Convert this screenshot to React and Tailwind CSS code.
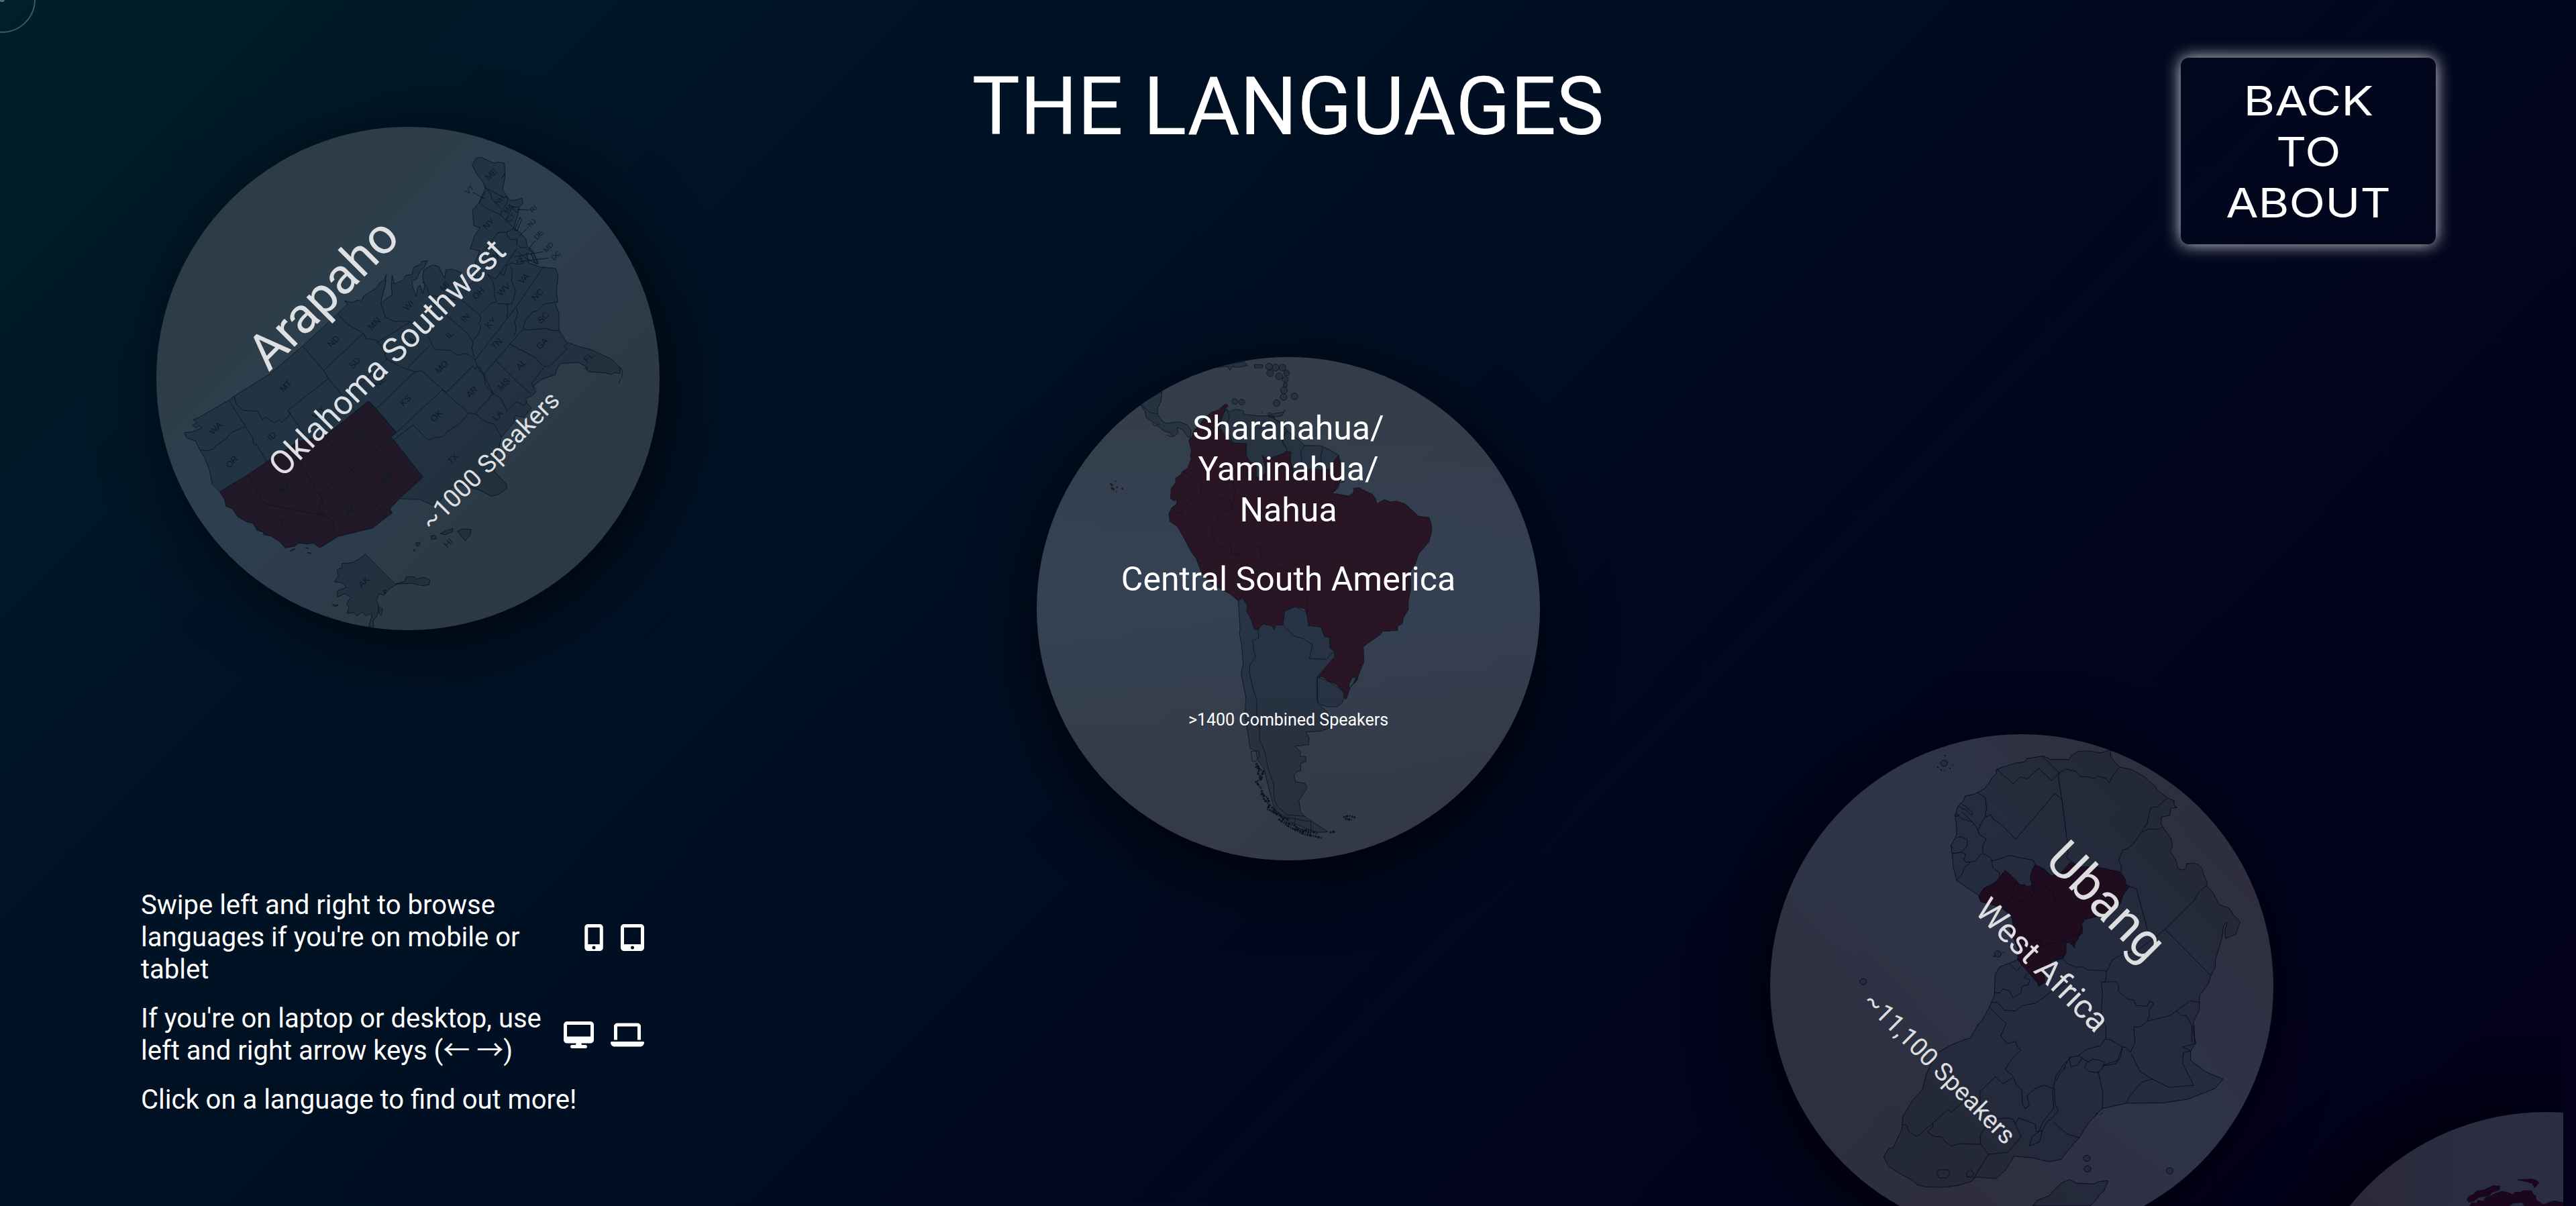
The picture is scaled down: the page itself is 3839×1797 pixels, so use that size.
import React from "react";
import { FaDesktop, FaLaptop, FaMobileScreenButton, FaTabletScreenButton } from "react-icons/fa6";

const STATES = [
  ["WA", 232, 937], ["OR", 278, 1035], ["ID", 392, 960], ["MT", 432, 814], ["ND", 568, 683],
  ["SD", 628, 746], ["MN", 684, 632], ["WI", 782, 578], ["MI", 884, 522], ["OH", 981, 543],
  ["IN", 943, 614], ["IL", 898, 663], ["KY", 1016, 629], ["WV", 1053, 532], ["VA", 1110, 500],
  ["NC", 1149, 547], ["SC", 1165, 614], ["TN", 1032, 690], ["GA", 1162, 690], ["AL", 1103, 751],
  ["MS", 1053, 808], ["MO", 876, 758], ["AR", 962, 831], ["KS", 773, 856], ["OK", 861, 901],
  ["LA", 1036, 900], ["TX", 908, 1026], ["NE", 700, 802], ["CO", 643, 960], ["UT", 529, 1047],
  ["NV", 425, 1110], ["NM", 718, 1081], ["AZ", 615, 1177], ["CA", 415, 1215], ["FL", 1295, 730],
  ["NY", 1010, 340], ["ME", 1018, 195], ["PA", 1030, 435], ["WY", 525, 890], ["IA", 790, 685],
  ["HI", 895, 1272], ["AK", 654, 1386],
];

const SMALL_STATES = [
  ["VT", 955, 240], ["NH", 1041, 270], ["MA", 1065, 295], ["CT", 1073, 322], ["RI", 1137, 296],
  ["NJ", 1132, 337], ["DE", 1152, 372], ["MD", 1180, 408], ["DC", 1201, 432],
];

function StateLabels({ items, size }) {
  return items.map(([name, x, y]) => (
    <text
      key={name}
      transform={`translate(${x * 0.523 - 33} ${y * 0.5102 - 29}) rotate(-45)`}
      fontSize={size}
      textAnchor="middle"
      dominantBaseline="central"
      fontFamily="Liberation Sans, sans-serif"
      fill="#0e1c28"
    >
      {name}
    </text>
  ));
}

function UnitedStates() {
  return (
    <svg className="absolute inset-0 size-full" viewBox="0 0 750 750" fill="none" stroke="#0b1824" strokeLinejoin="round">
      <g transform="translate(-33 -29) scale(.523 .5102)" strokeWidth="1.8">
        <g fill="#081824" fillOpacity=".26">
          <path d="M143 950 165 948 192 937 185 930 176 936 166 928 178 922 168 912 180 908 270 855 285 843 385 780 480 697 580 603 608 575 600 565 622 570 635 563 648 565 655 550 690 528 700 512 712 505 718 488 716 515 705 560 703 572 722 556 735 548 733 520 735 490 741 516 765 505 775 490 792 488 796 468 815 458 820 450 835 448 828 465 815 478 805 500 792 508 793 522 803 552 808 525 815 520 823 545 828 520 822 495 825 475 850 460 868 465 875 480 885 500 888 475 905 472 930 482 945 510 935 530 960 515 975 490 972 450 985 420 958 412 970 375 985 352 968 345 964 300 983 278 1001 235 992 215 978 198 963 168 975 148 988 146 1025 163 1037 160 1055 163 1057 200 1050 240 1063 262 1072 272 1088 270 1105 265 1108 280 1098 290 1094 310 1082 352 1100 365 1116 385 1120 405 1135 418 1152 458 1140 452 1132 430 1118 425 1125 455 1160 467 1200 470 1208 490 1203 540 1207 568 1200 575 1210 600 1211 652 1232 685 1265 698 1300 707 1360 735 1385 760 1384 778 1370 774 1360 780 1340 775 1295 772 1285 755 1265 745 1215 748 1204 765 1200 780 1160 795 1135 815 1145 830 1135 842 1116 850 1118 862 1132 878 1110 905 1085 900 1082 920 1045 965 1040 992 1028 1020 1027 1065 1060 1100 1062 1113 1040 1130 1018 1136 985 1118 925 1100 890 1120 872 1148 850 1162 815 1145 755 1143 728 1173 735 1185 718 1197 680 1228 580 1253 529 1286 510 1272 495 1275 470 1272 455 1282 430 1286 415 1268 390 1252 370 1248 368 1240 350 1235 340 1215 320 1210 295 1195 280 1172 262 1165 258 1145 244 1122 222 1100 215 1060 200 1022 187 1000 175 975 150 965Z" />
          <path d="M659 1305 743 1392 770 1385 775 1372 795 1370 805 1378 825 1372 843 1380 840 1394 820 1397 790 1390 750 1392 728 1405 712 1425 698 1420 690 1440 697 1455 692 1485 680 1500 683 1517 668 1517 677 1485 675 1478 660 1485 650 1473 635 1485 625 1475 607 1478 612 1460 605 1450 617 1430 600 1420 580 1430 578 1412 605 1402 592 1388 570 1385 582 1370 578 1350 592 1345 592 1332 620 1330 640 1320Z" />
          <path d="M921 1238 935 1231 960 1233 958 1248 943 1266 930 1250ZM872 1245 890 1236 908 1230 906 1240 885 1248ZM845 1252 858 1250 861 1259 848 1262ZM803 1272 814 1270 813 1279 805 1281ZM796 1296 800 1290 799 1295ZM698 1460 708 1465 704 1483 697 1478ZM565 1452 582 1454 570 1458ZM708 1412 718 1410 714 1420Z" />
        </g>
        <path fill="#261a28" d="M244 1122 324 1073 378 1035 470 975 545 958 668 858 747 950 732 962 823 1080 755 1143 728 1173 735 1185 718 1197 680 1228 580 1253 529 1286 510 1272 495 1275 470 1272 455 1282 430 1286 415 1268 390 1252 370 1248 368 1240 350 1235 340 1215 320 1210 295 1195 280 1172 262 1165 258 1145Z" />
        <path d="M444 1296 458 1289M488 1286 497 1289M494 1300 504 1303" stroke="#261a28" strokeWidth="4" />
        <path d="M187 1000 205 1003 225 998 232 988 260 970 280 948 317 932M270 855 317 932 338 965 340 982 350 987 378 1035M285 843 290 865 310 885 352 887 365 912 375 905 400 922 415 912 420 920 445 897 438 885 553 792M438 885 495 970M480 697 540 768 553 792 632 890M540 768 650 663M580 603 610 635 645 655 655 663 660 675 690 680 712 710 718 735 765 760 800 772 820 770 888 832M703 572 712 600 715 612 740 625 780 625 800 630M690 688 785 628M690 880 800 772M600 852 720 735M632 890 668 858 690 880 747 950 878 825 888 832M735 975 795 927 838 972 855 965 880 962 895 945 925 925 940 910 953 893 878 825M780 760 840 698M953 893 972 895 1023 835 1005 800 982 755M972 895 1005 920 1025 925 1048 965M1120 860 1112 870 1090 860 1062 887 1045 850 1023 835" />
        <path d="M324 1073 372 1158 545 1193M455 1010 528 1130 538 1155 525 1160 530 1178 545 1193 570 1210 565 1230 578 1250M528 1130 618 1058 732 965M545 960 618 1058 718 1197" />
        <path d="M965 248 1000 268M1090 298 1125 300M1097 376 1123 350M1123 415 1142 390M1082 436 1165 422M1100 450 1182 440M1385 758 1391 770 1389 790M1385 792 1381 806" />
      </g>
      <g transform="translate(367 31) scale(.33333)" strokeWidth="2.8">
        <path d="M370 178 395 208 400 232 445 275M365 178 452 222 467 218 470 240 445 280 437 302M372 195 342 247 365 265 405 285 437 300 460 325 498 360M460 325 492 265 520 265M492 265 500 282 515 292M498 362 465 377 425 380 400 415 370 455M465 377 470 400 487 412 510 408 512 435 530 448 555 445M512 450 415 590 380 565 405 600 412 640 410 660 420 690 395 695 345 745M500 370 525 310 530 325 512 372ZM437 560 455 572 465 525 490 515 515 522M480 530 490 550 487 595 505 640 495 680 485 700 425 697M632 530 505 715 323 950M685 690 630 700 600 730 580 735 550 770 540 800 545 815 600 812 640 808 660 815 700 820M508 715 515 740 502 780 508 815 500 838M540 810 365 1010M478 878 595 938 610 960 635 978 655 978 735 900 722 890 740 872M635 978 575 1058 600 1080M415 950 520 1055 575 1100M325 955 345 1000 365 1010 370 1060 390 1085 405 1105M195 1095 315 975 325 990 335 978M115 845 135 885 145 903 210 905 225 915 245 928 280 920 310 935 325 950M195 750 285 825 300 845 315 870 310 895 320 935M312 870 345 820 350 800 340 785 350 765 342 745 262 680M90 600 110 625 120 660 240 680M100 740 195 660 240 680M468 700 470 740 465 760M510 505 525 495 540 515 520 522ZM515 465 545 490 600 520M520 480 535 500M560 455 585 470 605 515M440 140 458 115 448 130M812 988 826 982 822 995" />
      </g>
      <g stroke="none">
        <StateLabels items={STATES} size={13} />
        <StateLabels items={SMALL_STATES} size={10.5} />
      </g>
    </svg>
  );
}

const CARIBBEAN = [
  [728, 72, 10], [747, 75, 10], [767, 75, 10], [731, 91, 10], [757, 101, 10], [779, 91, 8],
  [775, 110, 9], [775, 126, 6], [771, 142, 10], [770, 162, 10], [802, 160, 10], [750, 180, 10],
  [628, 175, 8.5], [648, 177, 8.5],
];

function SouthAmerica() {
  return (
    <svg className="absolute inset-0 size-full" viewBox="0 0 750 750" fill="none" stroke="#0c1724" strokeLinejoin="round">
      <g transform="translate(-25 -22) scale(.5102 .5038)" strokeWidth="1.8">
        <g fill="#0c1c2a" fillOpacity=".32">
          <path d="M603 197 592 215 585 235 583 262 600 280 622 298 662 300 660 330 668 350 690 365 690 398 710 400 722 390 710 340 735 342 765 330 782 320 768 298 768 282 780 262 770 245 745 228 740 217 700 218 655 213 652 202 630 198 612 205Z" />
          <path d="M780 262 810 285 832 305 880 306 905 318 932 335 905 378 850 378 795 382 788 345 790 322 768 298 768 282Z" />
          <path d="M638 765 643 850 641 860 648 900 652 950 646 980 650 1000 660 1050 657 1100 668 1170 672 1200 690 1210 694 1235 712 1260 722 1300 735 1350 745 1385 780 1415 840 1440 870 1450 900 1448 850 1415 835 1405 820 1390 815 1355 835 1325 838 1315 832 1304 805 1300 800 1280 810 1270 820 1267 820 1245 835 1240 835 1225 818 1225 820 1212 803 1195 843 1190 845 1170 835 1153 880 1150 905 1140 905 1110 895 1090 870 1070 868 990 900 958 920 930 918 912 906 905 905 872 890 870 880 842 843 838 838 800 805 782 773 795 768 836 748 836 710 832 696 850 685 848 665 780 650 755Z" />
          <path d="M868 990 900 1002 945 1033 948 1050 940 1068 925 1078 900 1078 878 1072 868 1060Z" />
          <path d="M352 183 415 145 412 175 402 195 402 212 415 232 428 240 465 235 490 245 500 262 498 285 488 278 475 258 458 252 462 268 448 280 438 268 420 262 400 245 368 222 366 205Z" />
          <path d="M575 74 610 65 655 57 665 68 640 74 620 72 613 83 608 72ZM685 66 710 67 708 75 686 76ZM725 214 772 206 765 218 728 222Z" />
          {CARIBBEAN.map(([x, y, r]) => (
            <circle key={`${x}-${y}`} cx={x} cy={y} r={r} />
          ))}
        </g>
        <path fill="#2a1524" d="M605 183 597 184 580 200 560 207 540 222 520 250 510 258 502 280 493 290 501 320 498 335 500 345 490 372 475 382 470 392 455 402 455 415 442 432 440 462 452 470 458 462 458 478 443 490 435 508 438 530 460 545 480 580 500 620 515 640 530 680 560 715 615 745 638 765 650 755 665 780 662 795 675 820 685 848 696 850 710 832 720 836 735 838 742 850 748 836 768 836 773 795 805 782 830 788 838 800 843 838 880 842 890 870 905 872 906 905 918 912 920 930 895 958 870 990 885 990 900 1002 920 1010 945 1033 947 1052 953 1055 965 1020 985 1000 990 980 1005 945 1003 900 1020 888 1052 865 1060 855 1103 852 1103 840 1117 832 1120 815 1135 790 1134 770 1142 725 1140 680 1155 655 1165 625 1195 590 1203 560 1202 540 1195 518 1165 515 1125 478 1100 470 1080 472 1065 465 1042 478 1040 465 1030 450 990 430 975 432 975 445 960 455 935 450 912 447 930 430 933 415 942 400 935 350 930 335 915 355 905 375 885 378 850 375 800 384 790 350 792 325 778 322 770 330 735 342 722 348 708 335 716 360 718 385 700 402 690 398 690 365 668 350 660 330 662 300 622 298 600 280 590 262 583 250 590 225 600 195 608 190Z" />
        <path fill="#343c4a" d="M970 992 982 990 975 1008 960 1025 962 1010Z" />
        <path d="M475 382 490 390 510 405 530 418 528 450 505 465 485 480 470 508 455 503 447 485M530 418 545 432 555 448 575 462 600 460 618 475 620 495M622 385 622 415 630 440 620 495 600 498 580 512 572 530 560 560 572 597 590 605 600 605 615 597 618 625 635 625 650 665 643 700 650 755M622 385 640 380 690 398M635 627 665 620 700 600 705 635 730 655 780 675 810 705 830 740 842 765 838 800M832 305 820 325 825 365M885 308 878 340 885 375M603 197 612 222 600 250 622 298M352 183 380 208 402 212" />
        <path d="M696 850 697 875 680 882 682 905 688 930 672 955 670 975 680 1020 692 1060 692 1100 700 1140 700 1175 715 1210 725 1260 742 1310 742 1345 750 1370 780 1398 835 1402M768 836 800 868 830 878 855 895 845 935 895 938 918 912M780 1405 850 1418 850 1450M805 1405 800 1430 825 1440" />
        <g stroke="#0b1320" strokeWidth="6" strokeDasharray="5 2 8 3 3 3">
          <path d="M690 1245 700 1262 695 1275 708 1290 690 1300 705 1320M688 1255 712 1270 700 1290M706 1325 712 1350 730 1370 722 1380 748 1392M703 1335 722 1345 728 1360M740 1390 765 1405 775 1420 800 1428 820 1445 850 1452M735 1375 760 1398 785 1412M755 1410 790 1435 830 1455 885 1466M905 1450 920 1447M945 1405 962 1400 980 1406M950 1410 970 1412M800 1440 850 1445 870 1455" />
        </g>
        <path d="M675 1210 698 1208 700 1225 688 1240 678 1238Z" />
        <path d="M263 418 272 424M266 430 276 436M280 410 280 413M282 428 285 430M281 440 283 441M297 434 301 432" stroke="#2a1524" strokeWidth="6" />
        <path d="M908 447 925 430 918 420 948 412 945 400M925 452 960 458M704 208 708 209M720 211 735 208M770 203 776 200M735 222 750 230 770 240M385 240 395 248 408 242M430 275 445 280" />
      </g>
    </svg>
  );
}

function Africa() {
  return (
    <svg className="absolute inset-0 size-full" viewBox="0 0 750 750" fill="none" stroke="#080d1e" strokeLinejoin="round">
      <g transform="translate(-28 -24) scale(.5102 .4636)" strokeWidth="1.9">
        <g fill="#0c1a28" fillOpacity=".26">
          <path d="M853 122 875 133 928 133 935 120 955 107 985 105 1020 112 1048 102 1050 125 1062 140 1075 157 1095 162 1110 165 1150 190 1180 220 1185 230 1218 258 1235 265 1235 280 1243 287 1225 290 1222 312 1198 318 1197 340 1205 355 1225 385 1230 410 1224 430 1240 455 1247 485 1262 488 1270 480 1272 468 1290 466 1305 470 1318 485 1320 500 1332 528 1330 540 1345 555 1367 600 1395 610 1410 635 1428 655 1415 695 1385 708 1383 685 1390 655 1380 665 1375 705 1355 780 1355 800 1342 828 1335 855 1310 890 1308 940 1292 975 1290 1000 1298 1045 1283 1070 1283 1100 1325 1135 1345 1145 1378 1160 1355 1190 1275 1225 1200 1237 1095 1238 1025 1255 985 1300 960 1345 925 1390 905 1418 870 1426 820 1413 768 1408 740 1455 715 1480 655 1475 645 1488 605 1502 560 1508 510 1507 485 1500 470 1485 440 1468 400 1440 387 1410 400 1385 415 1380 440 1320 443 1280 470 1230 500 1193 510 1150 525 1110 545 1075 585 1050 620 1035 640 1028 665 980 675 970 695 930 710 890 712 825 725 800 775 778 790 750 770 700 765 650 750 625 725 605 670 590 665 570 630 545 600 522 590 480 587 440 583 410 600 375 598 330 595 320 602 285 620 265 625 250 650 245 680 228 697 205 700 195 715 180 715 165 770 145 800 140 805 130Z" />
          <path d="M822 1568 835 1550 870 1535 890 1510 905 1495 930 1483 950 1495 1000 1497 1015 1490 1042 1487 1030 1520 1015 1535 1010 1545 990 1568Z" />
          <circle cx="980" cy="1415" r="10" />
          <circle cx="982" cy="1449" r="10" />
          <circle cx="1222" cy="1455" r="10" />
          <circle cx="327" cy="847" r="10" />
          <circle cx="720" cy="758" r="10" />
          <circle cx="563" cy="145" r="10" />
        </g>
        <path d="M543 156 546 160M553 164 556 170M563 170 564 168M579 160 582 163M587 150 589 152M564 119 568 122M707 764 711 768M735 754 738 752" strokeWidth="3" />
        <path d="M765 1155 735 1175 712 1153 668 1200 668 1245M765 1155 775 1180 790 1195 792 1240 800 1255 812 1245 805 1215 830 1190 855 1180 880 1190 M885 1190 887 1240 897 1262 875 1290 865 1295 850 1325 842 1362 812 1375 820 1345 840 1330 850 1300 883 1255 880 1200 890 1150 915 1110 935 1090M920 1120 900 1145 890 1165M1013 1135 1027 1205 1025 1255M1083 1060 1070 1100 1030 1115M1095 1238 1105 1215 1140 1170 1170 1160 1220 1187 1292 1180 1260 1110 1262 1075 1283 1070M1110 1080 1135 1135 1170 1160M443 1305 455 1310 460 1330 485 1345 575 1258 583 1267 640 1215M530 1300 530 1315 515 1330 535 1345 555 1345 570 1365 585 1375 610 1368 670 1370 693 1402 650 1478M670 1370 668 1340 700 1290 750 1285 765 1290 788 1345 750 1395 693 1402M772 1305 780 1285 830 1305 832 1330 850 1325M885 1300 920 1335 960 1350" />
        <path d="M541 1462 548 1452 575 1452 580 1465 570 1478 548 1478ZM628 1462 640 1452 650 1462 645 1475 630 1474ZM1005 1280 1010 1268M1020 1275 1026 1268" />
      </g>
      <g transform="translate(242 -14) scale(.33333)" strokeWidth="2.8">
        <path fill="#250e20" d="M620 612 660 635 735 635 840 658 862 690 865 715 880 722 850 765 840 800 800 830 745 855 680 870 668 890 672 930 655 945 650 960 637 975 635 997 610 972 597 975 597 1020 583 1045 535 1055 500 1100 502 1150 475 1170 470 1155 380 1050 385 1010 345 910 360 895 355 855 310 820 270 805 215 790 207 765 230 730 270 710 285 700 325 650 375 695 390 715 412 715 425 725 445 715 437 680 445 650 460 625 500 645 530 675 570 665Z" />
        <path d="M288 198 360 264 395 233 425 242 475 194 533 250 567 215M490 140 567 215 562 230 578 330 602 520 605 575 598 590 620 612M567 215 595 198 640 208 660 230 690 232 725 240 740 228 775 240 790 260 800 235 835 190M578 333 548 307 390 490 372 512 300 440 270 420 262 402 235 412M200 302 235 325 242 370 235 412 218 440 205 470 180 435 130 390M200 465 210 490 240 510 225 540 225 575 255 590 265 605M110 400 130 420 165 430 180 435M108 505 130 500 155 515 155 540 130 570 90 575M130 570 150 580 140 600 150 615 190 610 220 575M108 695 135 665 140 640 170 615M265 605 270 640 298 660 300 680M265 608 305 598 345 583 380 592 450 605 460 625M935 478 920 500 900 530 870 555 850 560 833 605 845 635 843 658M935 478 960 440 975 370 1005 367 1045 330M935 480 970 465 1010 468 1025 458M880 722 912 733 962 920M1225 718 1190 750 1165 790 1040 915 920 1005 850 1025 805 1050 780 1100M1040 915 1243 1120M583 1045 600 1065 645 1085 670 1080 690 1095 778 1100 775 1140 755 1160 760 1200 755 1280 755 1300 775 1350 775 1400M755 1150 820 1148 832 1165 830 1190 870 1225 900 1230 910 1255 960 1258 970 1235 990 1245 968 1275 970 1300 960 1325M775 1405 800 1410 850 1440 865 1442 885 1465 905 1420 900 1350 930 1350 960 1325 1060 1300 1090 1280 1150 1235 1195 1240M1090 1280 1110 1298 1135 1300 1160 1345 1160 1420M1170 1345 1172 1425 1140 1435 1120 1440 1150 1455M345 1068 375 1100 400 1075M275 1195 300 1200 315 1180 345 1190 360 1220 395 1200 400 1170 430 1160 435 1140 410 1130 425 1110M265 1240 290 1240 320 1275 370 1280 400 1255 460 1245 530 1195 600 1155M255 1265 330 1335 305 1390 335 1425 370 1415 380 1440 395 1455 350 1500 325 1540 360 1570M775 1400 750 1435 690 1450 650 1480 615 1485 600 1510 585 1540M850 1440 840 1490 820 1515 760 1525M655 1480 700 1510M610 1490 620 1530 650 1520 670 1485" />
        <path d="M680 1530 690 1510 715 1495 745 1498 770 1510 758 1535 740 1555 700 1550ZM115 360 130 375 150 380 175 405 180 395 150 365 130 355M95 400 105 410 120 405M80 540 92 548" />
        <path d="M455 748 485 730 510 725 540 755 545 785 560 800 580 830 600 835 635 875 672 880M455 748 440 770 420 785 380 792 330 840M375 700 360 740 300 800M385 715 375 755 315 810M445 700 455 748M425 960 480 962 490 990 560 970 600 960 630 940 655 940 665 910 672 905" />
      </g>
    </svg>
  );
}

function FarMap() {
  return (
    <svg className="absolute inset-0 size-full" viewBox="0 0 750 750" fill="#220820" stroke="#140618" strokeWidth="2">
      <g transform="translate(20 -57) scale(.33333)">
        <path d="M712 560 725 545 740 540 755 525 790 518 830 500 860 502 858 518 825 530 812 545 800 548 765 552 745 568 720 575ZM725 591 735 575 755 580 760 565 785 570 795 555 820 545 850 530 870 525 900 532 915 540 930 528 950 530 965 522 1000 522 1010 540 1020 545 1022 565 1040 575 1055 585 1080 575 1100 568 1143 575 1143 600 975 600 960 575 920 578 890 600ZM937 474 1000 470 1020 475 1035 487 1015 510 1005 490 975 482Z" />
        <path fill="none" d="M790 520 800 545M850 532 865 580M905 535 905 575M955 530 990 560 990 590" />
      </g>
    </svg>
  );
}

function Planet({ place, tilt, fade, map, title, titleStyle, region, speakers, speakersStyle }) {
  return (
    <section className={`absolute size-[750px] ${place} ${fade}`}>
      <div
        className={`absolute inset-0 rounded-full bg-[linear-gradient(180deg,rgba(118,119,121,.44)_5%,rgba(115,128,142,.45)_40%,rgba(115,128,142,.45)_52%,rgba(118,119,121,.44)_85%)] shadow-[0_25px_100px_rgba(0,0,0,.75)] ${tilt}`}
      />
      <div className="absolute inset-0 overflow-hidden rounded-full">{map}</div>
      <div className={`relative flex size-full flex-col text-center text-white ${tilt}`}>
        <div className={`h-[301px] shrink-0 ${titleStyle}`}>{title}</div>
        <div className="h-[225px] shrink-0 text-[50px] leading-[61px]">{region}</div>
        <div className={speakersStyle}>{speakers}</div>
      </div>
    </section>
  );
}

export default function App() {
  return (
    <main className="relative h-[1797px] w-[3839px] overflow-hidden bg-[linear-gradient(135deg,#001f29_0%,#001426_22%,#000e22_46%,#01091f_58%,#02041c_74%,#03001a_100%)] font-['Roboto',sans-serif] text-white">
      <div className="absolute inset-y-0 left-0 w-[3820px] overflow-hidden">
        <Planet
          place="left-[233px] top-[189px]"
          tilt="-rotate-45"
          fade="opacity-[.87]"
          map={<UnitedStates />}
          title="Arapaho"
          titleStyle="pt-[151px] text-[75px] leading-[91px]"
          region="Oklahoma Southwest"
          speakers="~1000 Speakers"
          speakersStyle="text-[37.5px] leading-[45px]"
        />
        <Planet
          place="left-[1545px] top-[532px]"
          tilt="rotate-0"
          fade="opacity-100"
          map={<SouthAmerica />}
          title={<>Sharanahua/<br />Yaminahua/<br />Nahua</>}
          titleStyle="pt-[76px] text-[50px] leading-[61px]"
          region="Central South America"
          speakers=">1400 Combined Speakers"
          speakersStyle="text-[25px] leading-[30px]"
        />
        <Planet
          place="left-[2638px] top-[1094px]"
          tilt="rotate-45"
          fade="opacity-[.87]"
          map={<Africa />}
          title="Ubang"
          titleStyle="pt-[151px] text-[75px] leading-[91px]"
          region="West Africa"
          speakers="~11,100 Speakers"
          speakersStyle="text-[37.5px] leading-[45px]"
        />
        <Planet place="left-[3419px] top-[1657px]" tilt="rotate-90" fade="opacity-[.8]" map={<FarMap />} />
      </div>

      <div className="relative flex h-full flex-col justify-between pb-[134px]">
        <header className="grid grid-cols-[1fr_auto_1fr] items-start pr-[209px] pl-[209px] pt-[86px]">
          <span />
          <h1 className="pt-[1px] text-[120px] leading-[145px]">THE LANGUAGES</h1>
          <button className="flex h-[278px] w-[380px] flex-col items-center justify-center justify-self-end rounded-xl pt-[2px] font-['Inter',sans-serif] text-[60px] leading-[76px] shadow-[0_0_25px_rgba(255,255,255,.85)]">
            <span className="scale-x-[1.19]">BACK</span>
            <span className="scale-x-[1.16]">TO</span>
            <span className="scale-x-[1.17]">ABOUT</span>
          </button>
        </header>

        <footer className="ml-[210px] flex w-[750px] flex-col gap-[25px] text-[40px] leading-[48px]">
          <div className="flex items-center justify-between">
            <p>Swipe left and right to browse<br />languages if you're on mobile or<br />tablet</p>
            <div className="flex items-center gap-[25px]">
              <FaMobileScreenButton className="h-10 w-[30px]" />
              <FaTabletScreenButton className="h-10 w-[35px]" />
            </div>
          </div>
          <div className="flex items-center justify-between">
            <p className="h-24">
              If you're on laptop or desktop, use<br />left and right arrow keys (
              <span className="font-['Noto_Sans_CJK_JP',sans-serif] leading-none">←</span>{" "}
              <span className="font-['Noto_Sans_CJK_JP',sans-serif] leading-none">→</span>)
            </p>
            <div className="flex items-center gap-[25px]">
              <FaDesktop className="h-10 w-[45px]" />
              <FaLaptop className="h-10 w-[50px]" />
            </div>
          </div>
          <p>Click on a language to find out more!</p>
        </footer>
      </div>

      <div className="absolute -left-[47px] -top-[51px] flex size-[100px] items-center justify-center rounded-full border-2 border-white/25">
        <span className="size-[8px] rounded-full bg-white/35" />
      </div>
    </main>
  );
}
